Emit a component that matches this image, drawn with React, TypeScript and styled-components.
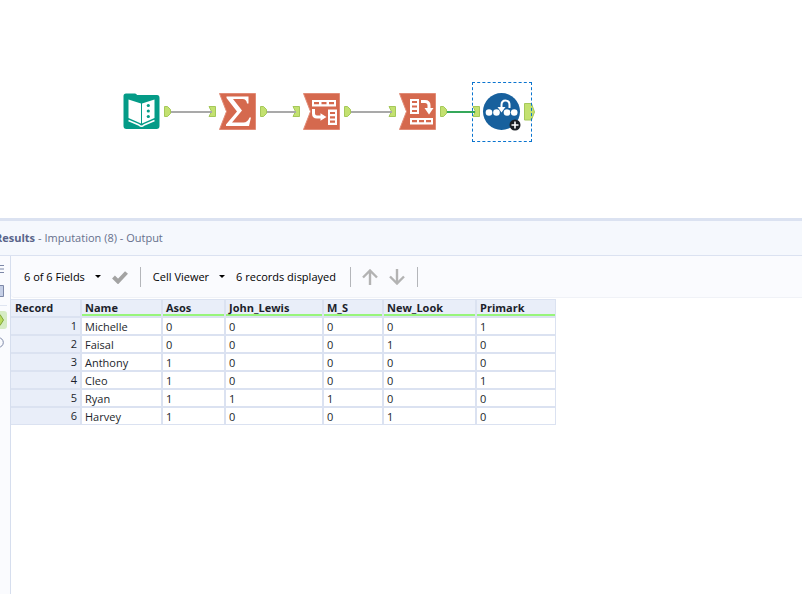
import React from "react";
import styled, { createGlobalStyle } from "styled-components";

const GlobalStyle = createGlobalStyle`
  * { box-sizing: border-box; }
  html, body, #root { height: 100%; }
  body {
    margin: 0;
    overflow: hidden;
    background: #fff;
    color: #1c1f2b;
    font-family: "Open Sans", "Noto Sans", sans-serif;
    font-size: 11px;
  }
  button { font: inherit; color: inherit; border: 0; padding: 0; background: none; }
`;

const Page = styled.div`
  display: flex;
  flex-direction: column;
  height: 100%;
`;

const Canvas = styled.main`
  position: relative;
  height: 218px;
  flex: none;
  background: #fff;
`;

const Wires = styled.svg`
  position: absolute;
  left: 0;
  top: 0;
  width: 100%;
  height: 100%;
`;

const ToolNode = styled.button<{ $left: number; $selected?: boolean }>`
  position: absolute;
  left: ${(p) => p.$left}px;
  top: 82px;
  width: 60px;
  height: 60px;
  outline: ${(p) => (p.$selected ? "1px dashed #0a74cf" : "none")};
  outline-offset: -1px;
  svg { display: block; overflow: visible; }
`;

const Results = styled.section`
  display: flex;
  flex-direction: column;
  flex: 1;
  margin-left: -20px;
  border-top: 3px solid #dbe2f1;
`;

const TitleBar = styled.header`
  display: flex;
  align-items: center;
  gap: 3px;
  height: 35px;
  padding: 0 0 2px 15px;
  background: #f5f8fd;
  border-bottom: 1px solid #dbe2f1;
  color: #66708c;
`;

const Title = styled.h1`
  margin: 0;
  font-size: 11px;
  font-weight: 700;
  color: #59648a;
`;

const Body = styled.div`
  display: flex;
  flex: 1;
`;

const SideBar = styled.nav`
  display: flex;
  flex-direction: column;
  align-items: flex-end;
  width: 31px;
  padding: 2px 3px 0 0;
  background: #fafbfe;
  border-right: 1px solid #d6deee;
`;

const SideButton = styled.button<{ $active?: boolean }>`
  display: flex;
  align-items: center;
  justify-content: flex-end;
  width: 24px;
  height: 18px;
  padding-right: 3px;
  margin: 2px 0;
  border-radius: 3px;
  background: ${(p) => (p.$active ? "#d6ecc4" : "transparent")};
`;

const SideRule = styled.hr`
  width: 24px;
  margin: 3px 0;
  border: 0;
  border-top: 1px solid #dfe5f1;
`;

const Content = styled.div`
  flex: 1;
  min-width: 0;
  background: #fff;
`;

const ToolBar = styled.div`
  display: flex;
  align-items: center;
  height: 42px;
  padding-left: 1px;
  background: #fafbfe;
  border-bottom: 1px solid #f0f2f7;
  border-radius: 0 0 0 4px;
  color: #000;
  white-space: nowrap;
`;

const MenuButton = styled.button`
  display: flex;
  align-items: center;
  gap: 10px;
  margin-left: 12px;
`;

const IconButton = styled.button`
  display: flex;
  margin-left: 11px;
`;

const Divider = styled.span`
  width: 1px;
  height: 20px;
  margin-left: 12px;
  background: #b4b6ba;
`;

const Status = styled.span`
  padding: 0 2px 0 11px;
`;

const Grid = styled.table`
  table-layout: fixed;
  width: 545px;
  margin-top: 1px;
  border-collapse: separate;
  border-spacing: 0;
  border-top: 1px solid #dbe2f1;
  line-height: 14px;

  tbody tr:last-child > * {
    height: 17px;
    border-bottom-width: 1px;
  }
`;

const cell = `
  padding: 1px 0 0 3px;
  border: solid #dbe2f1;
  border-width: 0 2px 2px 0;
  text-align: left;
  height: 18px;
  vertical-align: middle;
  &:last-child { border-right-width: 1px; }
`;

const HeadCell = styled.th<{ $plain?: boolean }>`
  ${cell}
  background: #e9eef9;
  font-weight: 700;
  padding-top: 0;
  padding-bottom: 1px;
  padding-left: ${(p) => (p.$plain ? 4 : 3)}px;
  box-shadow: ${(p) => (p.$plain ? "none" : "inset 0 -2px #98f57b")};
`;

const RowHead = styled.th`
  ${cell}
  background: #e9eef9;
  font-weight: 400;
  text-align: right;
  padding: 0 3px 0 0;
`;

const Cell = styled.td`
  ${cell}
  background: #fff;
`;

const Caret = () => (
  <svg width="6" height="3" viewBox="0 0 6 3" aria-hidden="true"><path d="M0 0h6L3 3z" fill="#000" /></svg>
);

const InAnchor = () => <path d="M1 24.500h6.500v10H1l2.500-5z" fill="#c3e170" stroke="#a5c85a" />;
const OutAnchor = () => <path d="M52.500 24.500h3l3 3v4l-3 3h-3z" fill="#c3e170" stroke="#a5c85a" />;

const TransformShape = () => <path d="M11.500 11.500h36v36h-36l7-18z" fill="#d5694e" stroke="#e28b76" strokeWidth="1" />;

const InputIcon = () => (
  <svg width="60" height="60" viewBox="0 0 60 60">
    <OutAnchor />
    <path d="M14 11.500h9q1.500 0 2 1.500h20q2.500 0 2.500 3v28q0 3-3 3H14.500q-3 0-3-3V14q0-2.500 2.500-2.500z" fill="#049b87" />
    <path d="M16.500 17.500L29 21.500V41.500L16.500 36z M30 21.500L42.500 17.500V36L30 41.500z" fill="#fff" />
    <path d="M16.500 38.500L27 43q2.500 2.500 5 0L42.500 38.500" fill="none" stroke="#fff" strokeWidth="1.500" />
    <circle cx="36.300" cy="23.500" r="1.600" fill="#049b87" />
    <circle cx="36.300" cy="29" r="1.600" fill="#049b87" />
    <circle cx="36.300" cy="34.500" r="1.600" fill="#049b87" />
  </svg>
);

const SummarizeIcon = () => (
  <svg width="60" height="60" viewBox="0 0 60 60">
    <TransformShape />
    <InAnchor />
    <OutAnchor />
    <path d="M18.500 14.500H40.500V21.500H39Q38.500 17 34.500 17H25L34 28.500L24 40.500H35.500Q39.500 40.500 41.500 35.500H43L41 44H18V42.500L29 29.500L18.500 16z" fill="#fff" />
  </svg>
);

const TransposeIcon = () => (
  <svg width="60" height="60" viewBox="0 0 60 60">
    <TransformShape />
    <InAnchor />
    <OutAnchor />
    <path d="M20 18h24v6.500H20z M36 27.500h9v15.500h-9z" fill="#fff" />
    <path d="M22 21.200h5M29.500 21.200h5M37 21.200h5M38 31h5M38 35.300h5M38 39.600h5" stroke="#d5694e" strokeWidth="2.200" />
    <path d="M21.500 27v4.500q0 3.500 3.500 3.500h5" fill="none" stroke="#fff" strokeWidth="3" />
    <path d="M28.500 31.300L34.500 35L28.500 38.700z" fill="#fff" />
  </svg>
);

const CrossTabIcon = () => (
  <svg width="60" height="60" viewBox="0 0 60 60">
    <TransformShape />
    <InAnchor />
    <OutAnchor />
    <path d="M22 17h9v15h-9z M22 36h23v6.500H22z" fill="#fff" />
    <path d="M24 20h5M24 24.500h5M24 29h5M24 39.200h5M31 39.200h5M38 39.200h5" stroke="#d5694e" strokeWidth="2.200" />
    <path d="M33 19.500h4q4 0 4 4v4" fill="none" stroke="#fff" strokeWidth="3" />
    <path d="M36.500 26h9L41 32.500z" fill="#fff" />
  </svg>
);

const ImputationIcon = () => (
  <svg width="60" height="60" viewBox="0 0 60 60">
    <InAnchor />
    <path d="M52.500 21.500h7l3 8.500-3 8h-7z" fill="#c3e170" stroke="#a5c85a" />
    <circle cx="29.500" cy="29.500" r="18.500" fill="#17609d" />
    <g fill="#fff">
      <circle cx="17" cy="30.500" r="3.300" />
      <circle cx="24.500" cy="30.500" r="3.300" />
      <circle cx="35" cy="30.500" r="3.300" />
      <circle cx="42.200" cy="30.500" r="3.300" />
      <path d="M25.500 25h8l-4 5.500z" />
    </g>
    <path d="M29.500 26v-3q0-4.500 4-4.500t4 4.500v3" fill="none" stroke="#fff" strokeWidth="2" />
    <circle cx="43" cy="43" r="5.500" fill="#1b1f24" />
    <path d="M39.500 43h7M43 39.500v7" stroke="#fff" strokeWidth="1.600" />
  </svg>
);

const tools = [
  { left: 112, name: "Input Data", Icon: InputIcon },
  { left: 208, name: "Summarize", Icon: SummarizeIcon },
  { left: 292, name: "Transpose", Icon: TransposeIcon },
  { left: 388, name: "Cross Tab", Icon: CrossTabIcon },
  { left: 472, name: "Imputation", Icon: ImputationIcon, selected: true },
];

const columns = ["Name", "Asos", "John_Lewis", "M_S", "New_Look", "Primark"];
const widths = [71, 81, 63, 98, 60, 93, 79];
const rows = [
  ["Michelle", 0, 0, 0, 0, 1],
  ["Faisal", 0, 0, 0, 1, 0],
  ["Anthony", 1, 0, 0, 0, 0],
  ["Cleo", 1, 0, 0, 0, 1],
  ["Ryan", 1, 1, 1, 0, 0],
  ["Harvey", 1, 0, 0, 1, 0],
];

export default function App() {
  return (
    <Page>
      <GlobalStyle />
      <Canvas>
        {tools.map(({ left, name, Icon, selected }) => (
          <ToolNode key={name} $left={left} $selected={selected} aria-label={name}>
            <Icon />
          </ToolNode>
        ))}
        <Wires pointerEvents="none" aria-hidden="true">
          <path d="M171 112h41M267 112h29M351 112h41" stroke="#a9a9a9" strokeWidth="2" />
          <path d="M447 112h28" stroke="#35a85a" strokeWidth="2" />
        </Wires>
      </Canvas>
      <Results>
        <TitleBar>
          <Title>Results</Title>
          <span>- Imputation (8) - Output</span>
        </TitleBar>
        <Body>
          <SideBar>
            <SideButton aria-label="Messages">
              <svg width="18" height="10" viewBox="0 0 18 10"><path d="M0 1.500h18M0 5h18M0 8.500h18" stroke="#7d88a8" /></svg>
            </SideButton>
            <SideButton aria-label="Data">
              <svg width="18" height="12" viewBox="0 0 18 12"><path d="M.5.5h17v11H.5z" fill="#c5cfe6" stroke="#7d88a8" /></svg>
            </SideButton>
            <SideRule />
            <SideButton $active aria-label="Output anchor">
              <svg width="18" height="12" viewBox="0 0 18 12"><path d="M1 .5h13l3.500 5.500-3.500 5.500H1z" fill="#b8db5c" stroke="#7fa63a" /></svg>
            </SideButton>
            <SideButton aria-label="Search">
              <svg width="18" height="11" viewBox="0 0 18 11"><circle cx="12.500" cy="5.500" r="4.800" fill="none" stroke="#7d88a8" /></svg>
            </SideButton>
          </SideBar>
          <Content>
            <ToolBar>
              <MenuButton>6 of 6 Fields<Caret /></MenuButton>
              <IconButton aria-label="Apply">
                <svg width="16" height="14" viewBox="0 0 16 14"><path d="M1.500 7L6 11.500L14.500 2.500" fill="none" stroke="#a3a3a3" strokeWidth="4" /></svg>
              </IconButton>
              <Divider />
              <MenuButton>Cell Viewer<Caret /></MenuButton>
              <Status>6 records displayed</Status>
              <Divider />
              <IconButton aria-label="Previous">
                <svg width="16" height="16" viewBox="0 0 16 16"><path d="M8 16V2M1 8.500L8 1.500L15 8.500" fill="none" stroke="#b3b3b3" strokeWidth="2.400" /></svg>
              </IconButton>
              <IconButton aria-label="Next">
                <svg width="16" height="16" viewBox="0 0 16 16"><path d="M8 0V14M1 7.500L8 14.500L15 7.500" fill="none" stroke="#b3b3b3" strokeWidth="2.400" /></svg>
              </IconButton>
              <Divider />
            </ToolBar>
            <Grid>
              <colgroup>{widths.map((w, i) => <col key={i} width={w} />)}</colgroup>
              <thead>
                <tr>
                  <HeadCell $plain scope="col">Record</HeadCell>
                  {columns.map((c) => <HeadCell key={c} scope="col">{c}</HeadCell>)}
                </tr>
              </thead>
              <tbody>
                {rows.map((r, i) => (
                  <tr key={i}>
                    <RowHead scope="row">{i + 1}</RowHead>
                    {r.map((v, j) => <Cell key={j}>{v}</Cell>)}
                  </tr>
                ))}
              </tbody>
            </Grid>
          </Content>
        </Body>
      </Results>
    </Page>
  );
}
